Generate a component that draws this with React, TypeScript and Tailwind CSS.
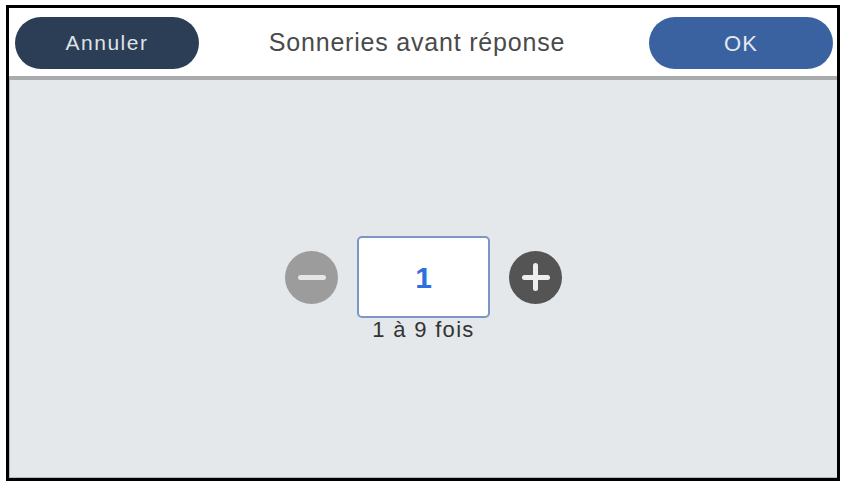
export default function App() {
  return (
    <div className="w-[843px] h-[482px] bg-white pt-[5px] pl-[6px] font-['Liberation_Sans',Arial,sans-serif]">
      <div className="w-[834px] h-[476px] border-[3px] border-black flex flex-col bg-white">
        {/* Header */}
        <div className="h-[68px] flex items-center justify-between pl-[6px] pr-[4px] pt-[2px] bg-white">
          <button className="w-[184px] h-[52px] rounded-full bg-[#2b3e55] text-[#dfe3e8] text-[21px] tracking-[1.5px]">
            Annuler
          </button>
          <div className="flex-1 text-center text-[25px] tracking-[0.8px] text-[#4a4a4a] pr-[14px]">
            Sonneries avant réponse
          </div>
          <button className="w-[184px] h-[52px] rounded-full bg-[#3b62a0] text-[#e4e9f1] text-[22px] tracking-[1px]">
            OK
          </button>
        </div>
        <div className="h-[4px] bg-[#a9abad]" />

        {/* Body */}
        <div className="flex-1 bg-[#e4e8eb] border-l border-b border-[#b8bbbe] flex flex-col items-center pt-[156px]">
          <div className="flex items-center gap-[19px]">
            <div className="w-[53px] h-[53px] rounded-full bg-[#9c9c9c] flex items-center justify-center">
              <div className="w-[28px] h-[5px] rounded-sm bg-[#e6e6e6]" />
            </div>
            <div className="w-[133px] h-[82px] bg-white border-2 border-[#7d96c8] rounded-[5px] flex items-center justify-center text-[30px] font-bold text-[#2c6fde]">
              1
            </div>
            <div className="w-[53px] h-[53px] rounded-full bg-[#545454] flex items-center justify-center relative">
              <div className="w-[28px] h-[5px] rounded-sm bg-[#eeeeee]" />
              <div className="absolute w-[5px] h-[28px] rounded-sm bg-[#eeeeee]" />
            </div>
          </div>
          <div className="mt-[1px] text-[22px] tracking-[1.3px] text-[#333333] leading-[22px]">1 à 9 fois</div>
        </div>
      </div>
    </div>
  )
}
